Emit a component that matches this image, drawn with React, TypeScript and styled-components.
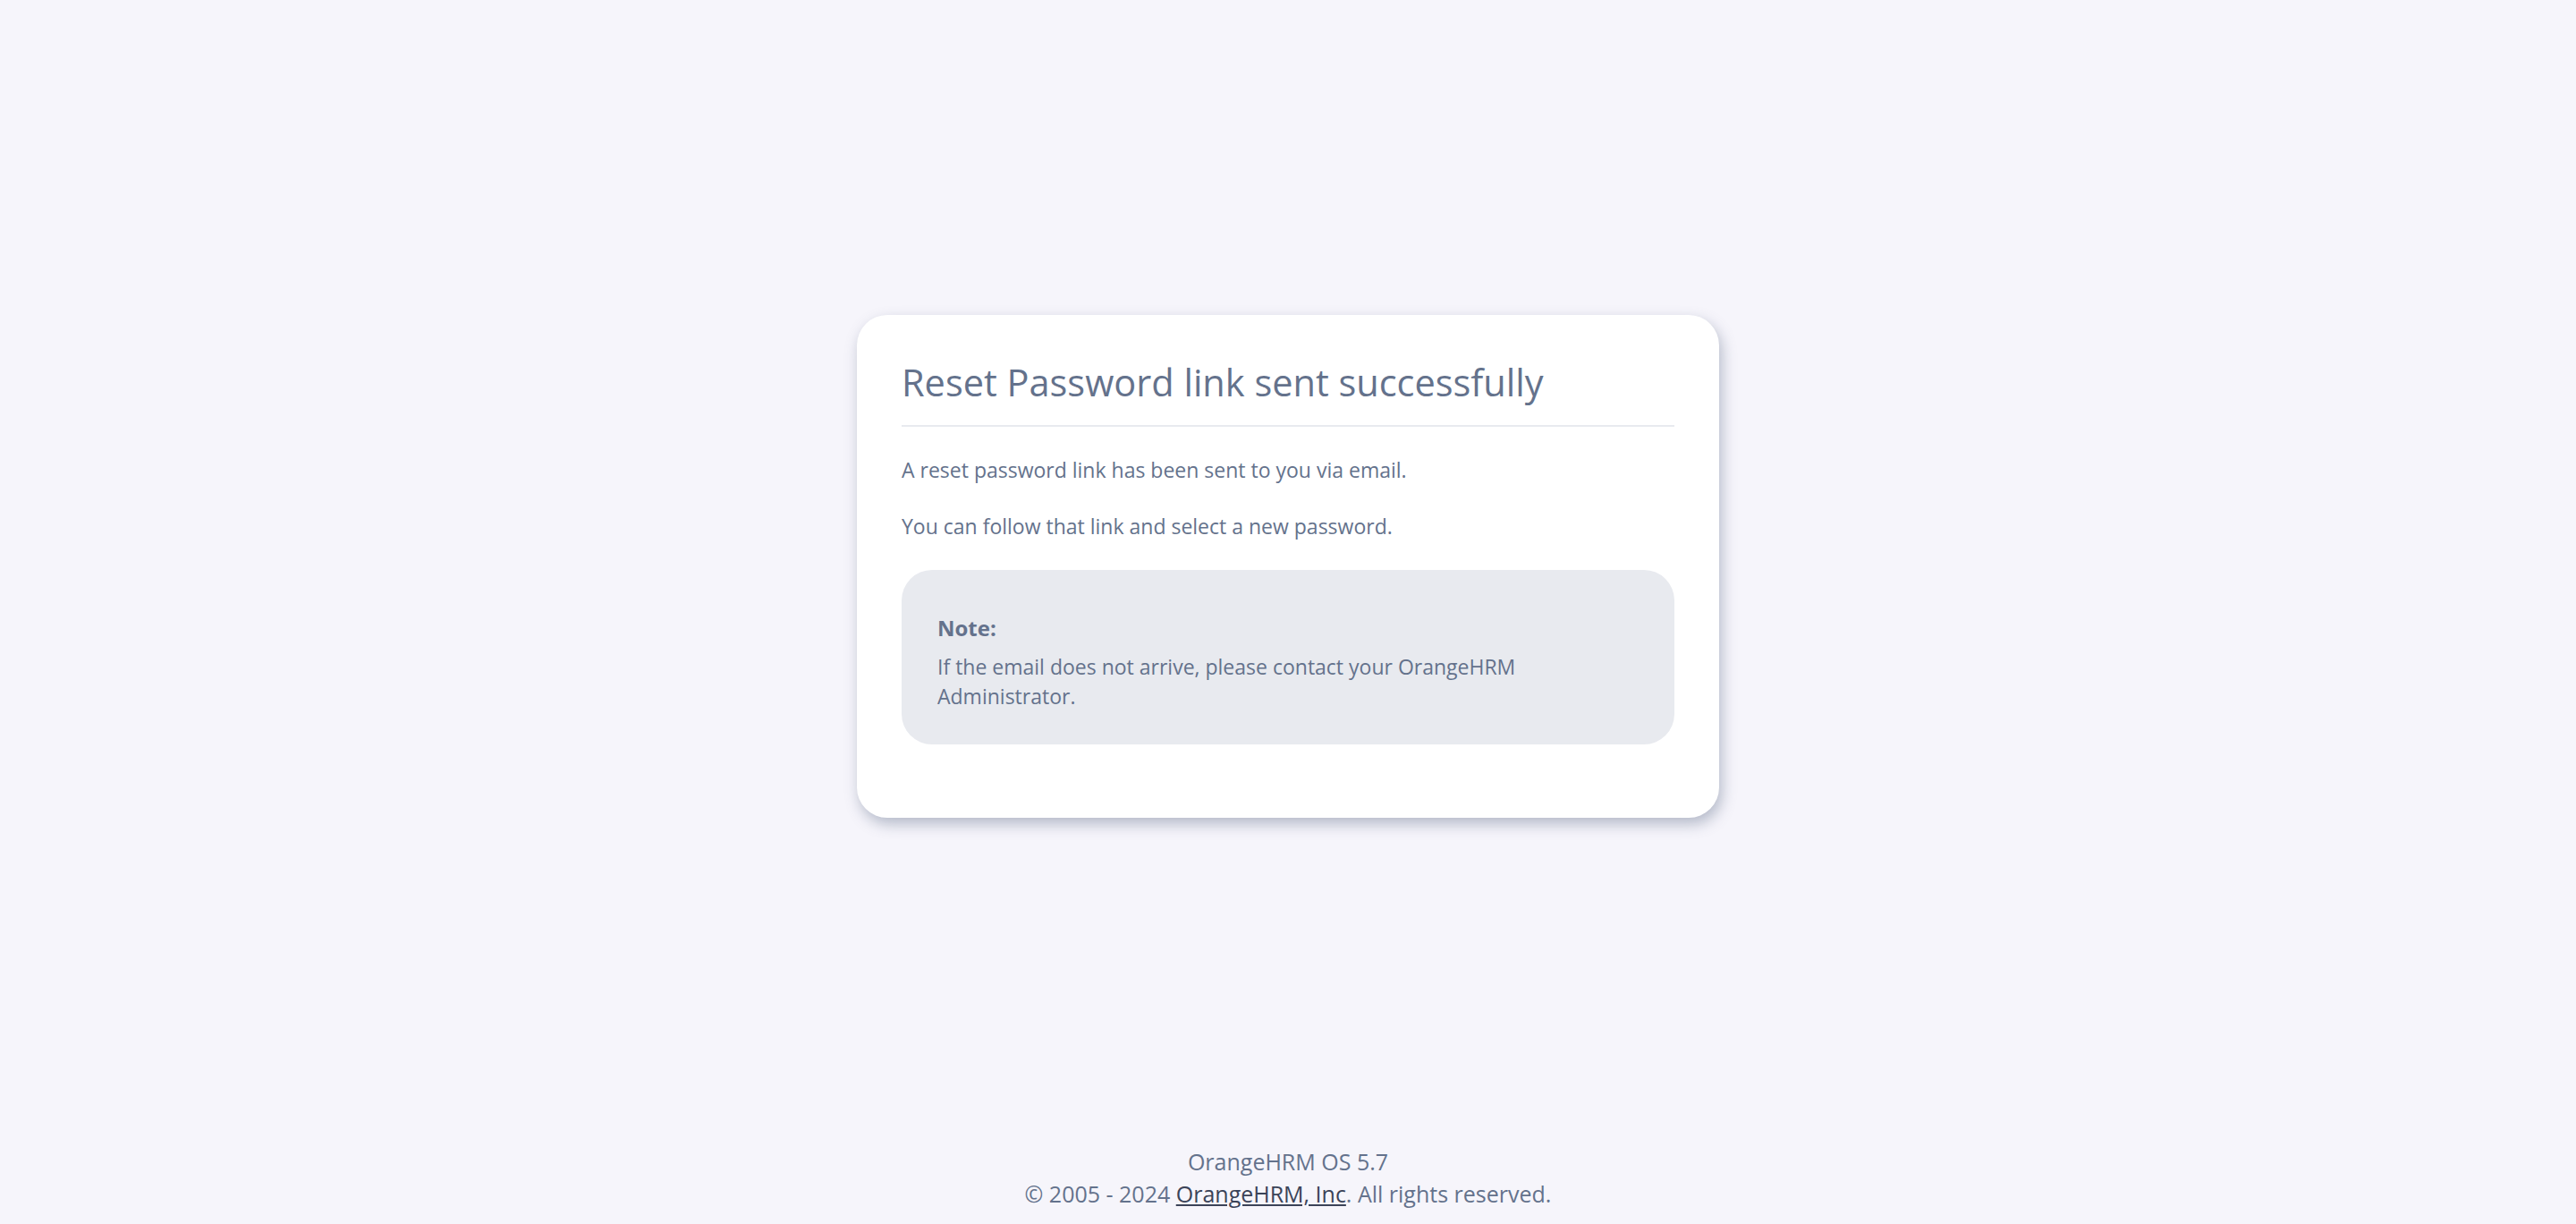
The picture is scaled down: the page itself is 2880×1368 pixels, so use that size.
import React from "react";
import styled, { createGlobalStyle } from "styled-components";

const GlobalStyle = createGlobalStyle`
  html, body {
    margin: 0;
    padding: 0;
    background: #f6f5fb;
  }
  body {
    font-family: "Open Sans", "Noto Sans", "Liberation Sans", sans-serif;
    color: #64728c;
  }
  * { box-sizing: border-box; }
`;

const Page = styled.div`
  min-height: 100vh;
  display: flex;
  flex-direction: column;
  background: #f6f5fb;
`;

const Main = styled.main`
  flex: 1;
  display: flex;
  align-items: center;
  justify-content: center;
  padding-bottom: 14px;
`;

const Card = styled.section`
  width: 964px;
  background: #ffffff;
  border-radius: 34px;
  padding: 50px 50px 82px;
  box-shadow: 3px 7px 16px rgba(100, 114, 140, 0.45);
`;

const Title = styled.h6`
  margin: 0;
  font-size: 41.5px;
  line-height: 50px;
  font-weight: 400;
  color: #64728c;
`;

const Divider = styled.hr`
  margin: 23px 0 0;
  border: none;
  height: 2px;
  background: #e8eaef;
`;

const Paragraph = styled.p<{ $top: number }>`
  margin: ${(p) => p.$top}px 0 0;
  font-size: 23px;
  line-height: 33px;
  color: #64728c;
`;

const NoteBox = styled.div`
  margin-top: 32px;
  background: #e8eaef;
  border-radius: 34px;
  padding: 46px 40px 37px;
`;

const NoteTitle = styled.p`
  margin: 0;
  font-size: 24px;
  line-height: 37.5px;
  font-weight: 700;
  color: #64728c;
`;

const NoteText = styled.p`
  margin: 8px 0 0;
  max-width: 740px;
  font-size: 23px;
  line-height: 33px;
  color: #64728c;
`;

const Footer = styled.footer`
  padding-bottom: 16px;
  text-align: center;
  font-size: 25px;
  line-height: 36px;
  color: #64728c;
`;

const FooterLine = styled.p`
  margin: 0;
`;

const FooterLink = styled.a`
  color: #3b4358;
  text-decoration: underline;
`;

export default function App() {
  return (
    <>
      <GlobalStyle />
      <Page>
        <Main>
          <Card>
            <Title>Reset Password link sent successfully</Title>
            <Divider />
            <Paragraph $top={32}>A reset password link has been sent to you via email.</Paragraph>
            <Paragraph $top={30}>You can follow that link and select a new password.</Paragraph>
            <NoteBox>
              <NoteTitle>Note:</NoteTitle>
              <NoteText>
                If the email does not arrive, please contact your OrangeHRM Administrator.
              </NoteText>
            </NoteBox>
          </Card>
        </Main>
        <Footer>
          <FooterLine>OrangeHRM OS 5.7</FooterLine>
          <FooterLine>
            © 2005 - 2024 <FooterLink href="#">OrangeHRM, Inc</FooterLink>. All rights reserved.
          </FooterLine>
        </Footer>
      </Page>
    </>
  );
}
